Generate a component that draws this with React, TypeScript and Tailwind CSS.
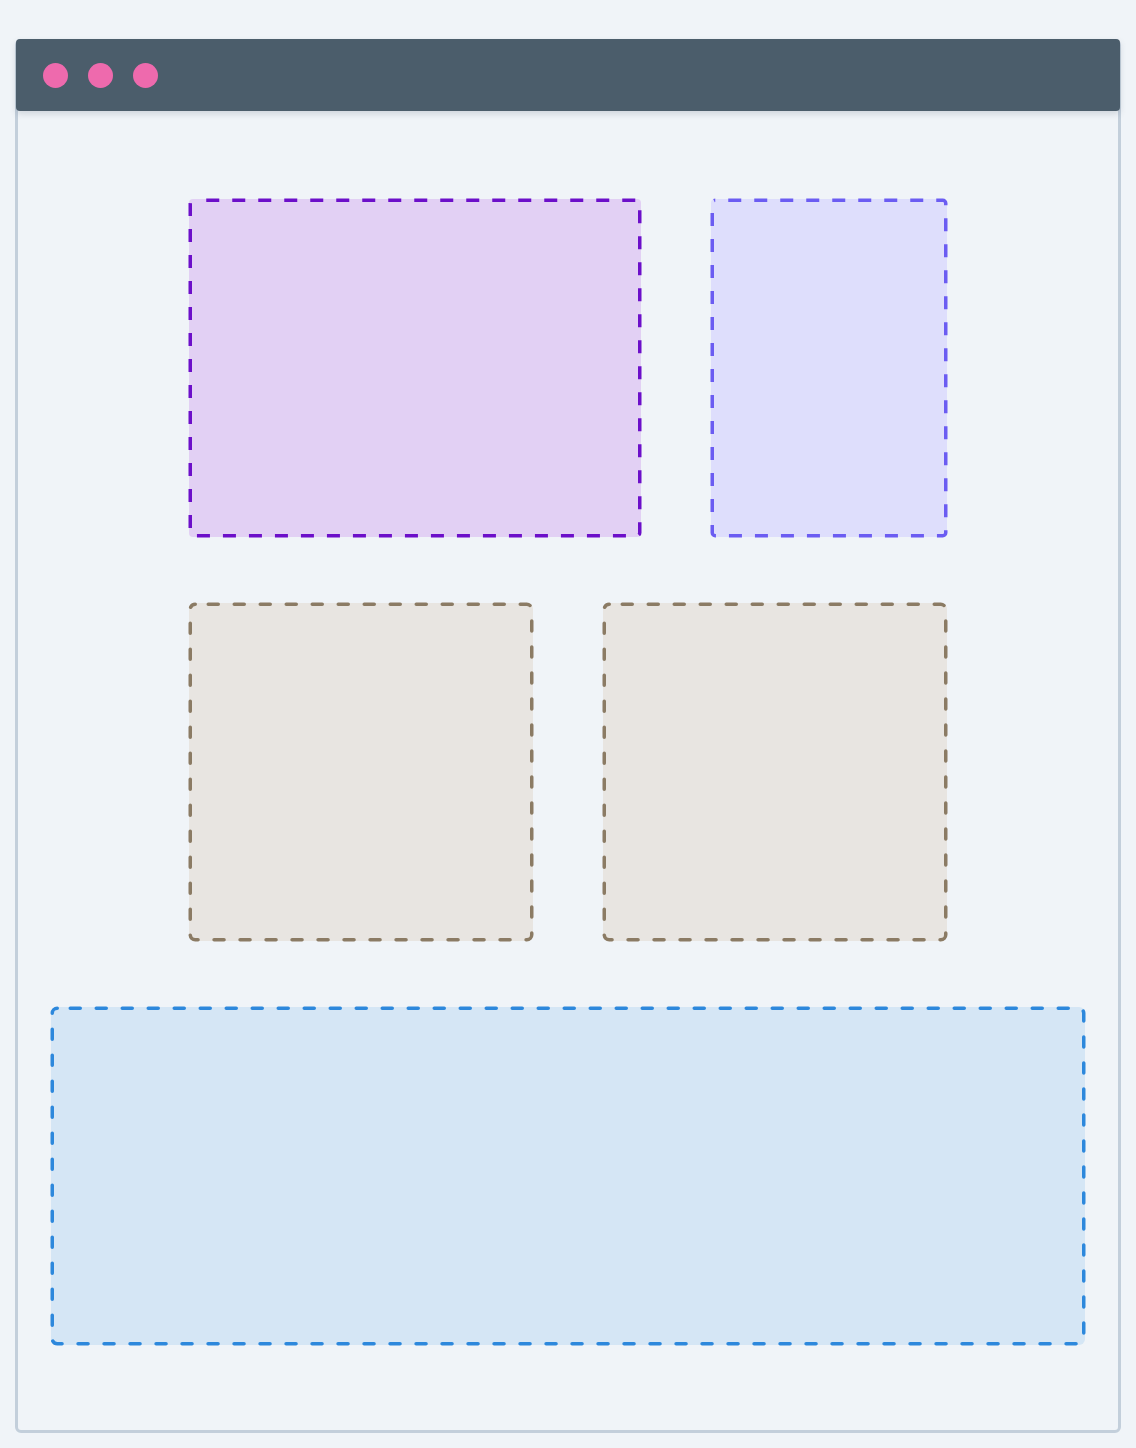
import React from "react";

const Dot: React.FC = () => (
  <span className="block h-[25px] w-[25px] rounded-full bg-[#ee6aad]" />
);

type BoxProps = {
  w: number;
  h: number;
  fill: string;
  stroke: string;
  radius: number;
  round?: boolean;
};

// Panel with a dashed outline drawn over its fill
const Box: React.FC<BoxProps> = ({ w, h, fill, stroke, radius, round }) => (
  <div className={`relative shrink-0 ${fill}`} style={{ width: w, height: h, borderRadius: radius }}>
    <svg className="absolute inset-0 overflow-visible" width={w} height={h}>
      <rect
        x={1.25}
        y={1.25}
        width={w - 2.5}
        height={h - 2.5}
        rx={radius - 1}
        fill="none"
        stroke={stroke}
        strokeWidth={3.5}
        strokeLinecap={round ? "round" : "butt"}
        strokeDasharray={round ? "10 16" : "13 13"}
        strokeDashoffset={13}
      />
    </svg>
  </div>
);

export default function App() {
  return (
    <div className="min-h-screen w-full bg-[#f0f4f8] px-[15px] pt-[39px] pb-[15px] font-['Inter',sans-serif]">
      <div className="flex flex-col rounded-[6px] border-[3px] border-[#c3cfdb] bg-[#f0f4f8]">
        {/* window title bar */}
        <div className="-mx-[2px] -mt-[3px] flex h-[72px] items-center gap-[20px] rounded-[4px] bg-[#4b5d6b] pl-[27px] shadow-[0_3px_6px_rgba(60,80,100,0.18)]">
          <Dot />
          <Dot />
          <Dot />
        </div>

        <div className="flex flex-col items-center gap-[66px] px-[33px] pt-[88px] pb-[85px]">
          <div className="flex w-[758px] gap-[70px]">
            <Box w={452} h={338} fill="bg-[#e2d0f4]" stroke="#6c0fc9" radius={4} />
            <Box w={236} h={338} fill="bg-[#dedefc]" stroke="#6b5cf2" radius={4} />
          </div>
          <div className="flex w-[758px] gap-[70px]">
            <Box w={344} h={338} fill="bg-[#e8e5e1]" stroke="#8b7b64" radius={6} round />
            <Box w={344} h={338} fill="bg-[#e8e5e1]" stroke="#8b7b64" radius={6} round />
          </div>
          <Box w={1034} h={338} fill="bg-[#d5e6f5]" stroke="#2d88dc" radius={6} round />
        </div>
      </div>
    </div>
  );
}
